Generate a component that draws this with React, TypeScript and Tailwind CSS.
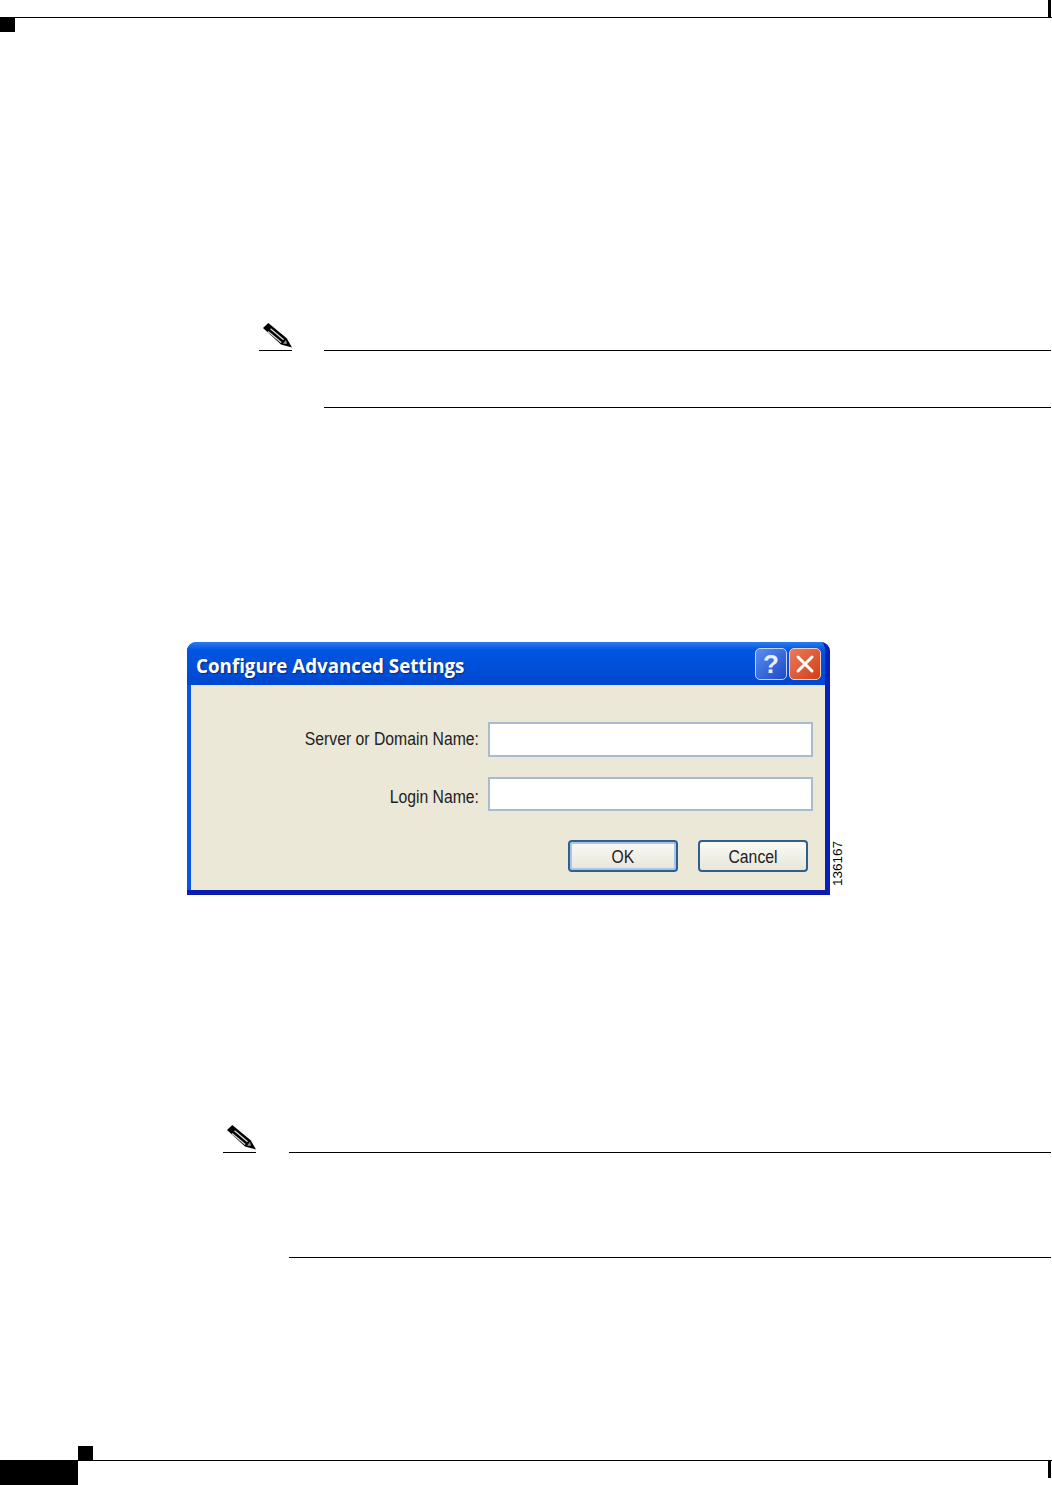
import React from 'react';

function Pencil() {
  return (
    <svg width="33" height="27" viewBox="0 0 33 27" className="block">
      <polygon points="4,6 9.3,1 27.7,16.3 33,25.5 22,22.6" fill="#000" />
      <line x1="11.5" y1="6.8" x2="24.6" y2="17.8" stroke="#d8d8d8" strokeWidth="1.3" />
      <line x1="9" y1="9.6" x2="22.2" y2="20.6" stroke="#d8d8d8" strokeWidth="1.3" />
      <polygon points="24,21.8 27,18 28,21.8" fill="#999" />
    </svg>
  );
}

function Note({ left, gap, height, className }: { left: number; gap: number; height: number; className: string }) {
  return (
    <div className={`flex items-start mr-[1px] ${className}`} style={{ marginLeft: left }}>
      <div className="w-[33px] h-[29px] border-b border-black shrink-0">
        <Pencil />
      </div>
      <div
        className="flex-1 border-y border-black mt-[28px]"
        style={{ marginLeft: gap, height }}
      />
    </div>
  );
}

function TextField() {
  return <div className="h-full ml-[9px] w-[325px] bg-white border-2 border-[#a9bccf]" />;
}

function DialogButton({ label, isDefault }: { label: string; isDefault?: boolean }) {
  return (
    <button
      className={`w-[110px] h-[32px] rounded-[4px] border-2 border-[#2f5f8c] bg-gradient-to-b from-[#fafaf6] to-[#e8e6da] text-[#222] text-[15.75px] ${
        isDefault ? 'shadow-[inset_0_0_0_2px_#a8c4ec]' : ''
      }`}
    >
      <span className="inline-block scale-y-[1.15] translate-y-[1px]">{label}</span>
    </button>
  );
}

export default function App() {
  return (
    <div className="w-[1052px] h-[1485px] bg-white flex flex-col overflow-hidden font-['Liberation_Sans',sans-serif]">
      {/* Top crop marks */}
      <div className="h-[18px] border-b border-black flex justify-end shrink-0">
        <div className="w-[3px] h-[17px] bg-black mr-[1px]" />
      </div>
      <div className="w-[15px] h-[14px] bg-black shrink-0" />

      <Note left={259} gap={32} height={58} className="mt-[290px]" />

      {/* Dialog */}
      <div className="flex items-end ml-[187px] mt-[234px] shrink-0">
        <div className="w-[643px] h-[253px] flex flex-col rounded-t-[9px] overflow-hidden bg-[#0855e0] border-r-[5px] border-b-[5px] border-r-[#0a1fb8] border-b-[#0a1cb0]">
          <div className="h-[43px] shrink-0 flex items-center justify-between pl-[9px] pr-[4px] pt-[1px] bg-gradient-to-b from-[#2a7cf0] from-[0%] via-[#0056e0] via-[18%] to-[#0048d0]">
            <span className="text-white font-bold text-[18.75px] font-['Open_Sans',sans-serif] scale-y-[1.08] translate-y-[1px] [text-shadow:1px_1px_1px_#0a2a80]">
              Configure Advanced Settings
            </span>
            <div className="flex gap-[2px]">
              <div className="w-[32px] h-[32px] rounded-[5px] border border-[#c4d4f4] bg-gradient-to-br from-[#5d8cf0] to-[#1d48c8] flex items-center justify-center text-[#e8eefc] font-bold text-[26px] leading-none">
                ?
              </div>
              <div className="w-[32px] h-[32px] rounded-[5px] border border-[#ecd0c4] bg-gradient-to-br from-[#e87a58] to-[#d23c0c] flex items-center justify-center">
                <svg width="20" height="20" viewBox="0 0 20 20">
                  <path d="M3 3 L17 17 M17 3 L3 17" stroke="#fff" strokeWidth="3" strokeLinecap="round" fill="none" />
                </svg>
              </div>
            </div>
          </div>
          <div className="flex-1 ml-[4px] bg-[#ebe8d8] pt-[37px] flex flex-col text-[#222] text-[15.75px]">
            <div className="h-[35px] flex items-center justify-end pr-[12px]">
              <span className="inline-block origin-center scale-y-[1.15] -translate-y-[1px]">Server or Domain Name:</span>
              <TextField />
            </div>
            <div className="h-[34px] mt-[20px] flex items-center justify-end pr-[12px]">
              <span className="inline-block origin-center scale-y-[1.15] translate-y-[3px]">Login Name:</span>
              <TextField />
            </div>
            <div className="flex justify-end gap-[20px] mt-[29px] pr-[17px]">
              <DialogButton label="OK" isDefault />
              <DialogButton label="Cancel" />
            </div>
          </div>
        </div>
        <span className="[writing-mode:vertical-rl] rotate-180 text-[13.5px] leading-[15px] mb-[9px] text-black">
          136167
        </span>
      </div>

      <Note left={223} gap={33} height={106} className="mt-[229px]" />

      {/* Bottom crop marks */}
      <div className="mt-auto w-[15px] h-[14px] bg-black ml-[78px] shrink-0" />
      <div className="h-[25px] flex items-start shrink-0">
        <div className="w-[78px] h-full bg-black" />
        <div className="flex-1 border-t border-black flex justify-end">
          <div className="w-[3px] h-[17px] bg-black mr-[1px]" />
        </div>
      </div>
    </div>
  );
}
